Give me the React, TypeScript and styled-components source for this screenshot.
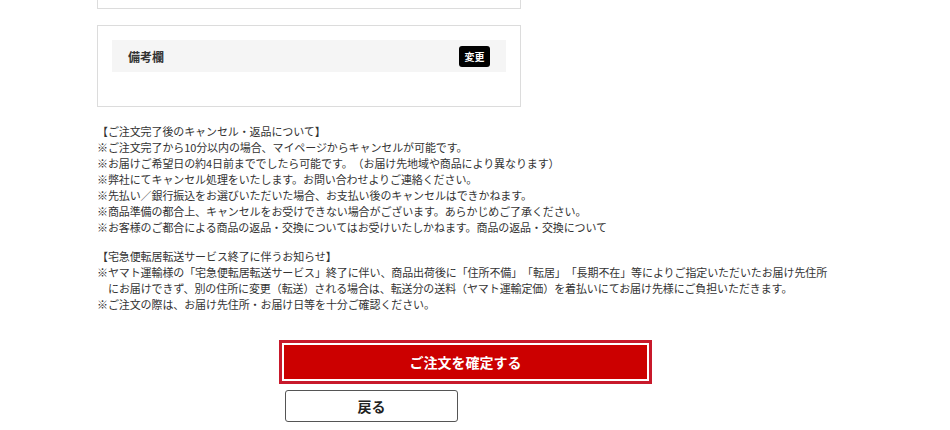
import React from "react";
import styled, { createGlobalStyle } from "styled-components";

const GlobalStyle = createGlobalStyle`
  html, body {
    margin: 0;
    padding: 0;
    background: #ffffff;
  }
  body {
    font-family: "Noto Sans CJK JP", "Noto Sans", sans-serif;
    color: #333333;
    text-spacing-trim: space-all;
  }
`;

const Page = styled.div`
  width: 737px;
  padding-left: 97px;
  display: flex;
  flex-direction: column;
`;

const TopStub = styled.div`
  width: 424px;
  height: 9px;
  box-sizing: border-box;
  border: 1px solid #dcdcdc;
  border-top: none;
`;

const Card = styled.div`
  width: 424px;
  box-sizing: border-box;
  margin-top: 16px;
  border: 1px solid #dcdcdc;
  padding: 14px 14px 34px 14px;
`;

const Bar = styled.div`
  height: 32px;
  background: #f5f5f5;
  display: flex;
  align-items: center;
  justify-content: space-between;
  padding: 0 16px;
`;

const BarTitle = styled.span`
  font-size: 12px;
  font-weight: 700;
  color: #333333;
`;

const SmallButton = styled.button`
  height: 21px;
  width: 31px;
  padding: 0;
  border: none;
  border-radius: 3px;
  background: #000000;
  color: #ffffff;
  font-family: inherit;
  font-size: 10px;
  font-weight: 700;
  display: flex;
  align-items: center;
  justify-content: center;
`;

const Notice = styled.div<{ $gap: number }>`
  margin-top: ${(p) => p.$gap}px;
  font-size: 11px;
  letter-spacing: -0.1px;
  line-height: 16px;
  color: #333333;
  white-space: nowrap;
  text-spacing-trim: space-all;
`;

const Line = styled.div<{ $indent?: boolean }>`
  padding-left: ${(p) => (p.$indent ? "11px" : "0")};
`;

const Actions = styled.div`
  width: 367px;
  margin: 31px auto 0 auto;
  display: flex;
  flex-direction: column;
  align-items: flex-start;
`;

const ConfirmButton = styled.button`
  width: 367px;
  height: 38px;
  box-sizing: border-box;
  border: 2px solid #ffffff;
  outline: 3px solid #c8192b;
  background: #cc0000;
  color: #ffffff;
  font-family: inherit;
  font-size: 14px;
  font-weight: 700;
  cursor: pointer;
`;

const BackButton = styled.button`
  margin-top: 9px;
  margin-left: 3px;
  width: 173px;
  height: 32px;
  box-sizing: border-box;
  border: 1px solid #555555;
  border-radius: 3px;
  background: #ffffff;
  color: #222222;
  font-family: inherit;
  font-size: 14px;
  font-weight: 700;
  cursor: pointer;
`;

const cancelLines = [
  "【ご注文完了後のキャンセル・返品について】",
  "※ご注文完了から10分以内の場合、マイページからキャンセルが可能です。",
  "※お届けご希望日の約4日前まででしたら可能です。（お届け先地域や商品により異なります）",
  "※弊社にてキャンセル処理をいたします。お問い合わせよりご連絡ください。",
  "※先払い／銀行振込をお選びいただいた場合、お支払い後のキャンセルはできかねます。",
  "※商品準備の都合上、キャンセルをお受けできない場合がございます。あらかじめご了承ください。",
  "※お客様のご都合による商品の返品・交換についてはお受けいたしかねます。商品の返品・交換について",
];

const App: React.FC = () => (
  <>
    <GlobalStyle />
    <Page>
      <TopStub />
      <Card>
        <Bar>
          <BarTitle>備考欄</BarTitle>
          <SmallButton>変更</SmallButton>
        </Bar>
      </Card>
      <Notice $gap={16}>
        {cancelLines.map((l) => (
          <Line key={l}>{l}</Line>
        ))}
      </Notice>
      <Notice $gap={13}>
        <Line>【宅急便転居転送サービス終了に伴うお知らせ】</Line>
        <Line>
          ※ヤマト運輸様の「宅急便転居転送サービス」終了に伴い、商品出荷後に「住所不備」「転居」「長期不在」等によりご指定いただいたお届け先住所
        </Line>
        <Line $indent>
          にお届けできず、別の住所に変更（転送）される場合は、転送分の送料（ヤマト運輸定価）を着払いにてお届け先様にご負担いただきます。
        </Line>
        <Line>※ご注文の際は、お届け先住所・お届け日等を十分ご確認ください。</Line>
      </Notice>
      <Actions>
        <ConfirmButton>ご注文を確定する</ConfirmButton>
        <BackButton>戻る</BackButton>
      </Actions>
    </Page>
  </>
);

export default App;
